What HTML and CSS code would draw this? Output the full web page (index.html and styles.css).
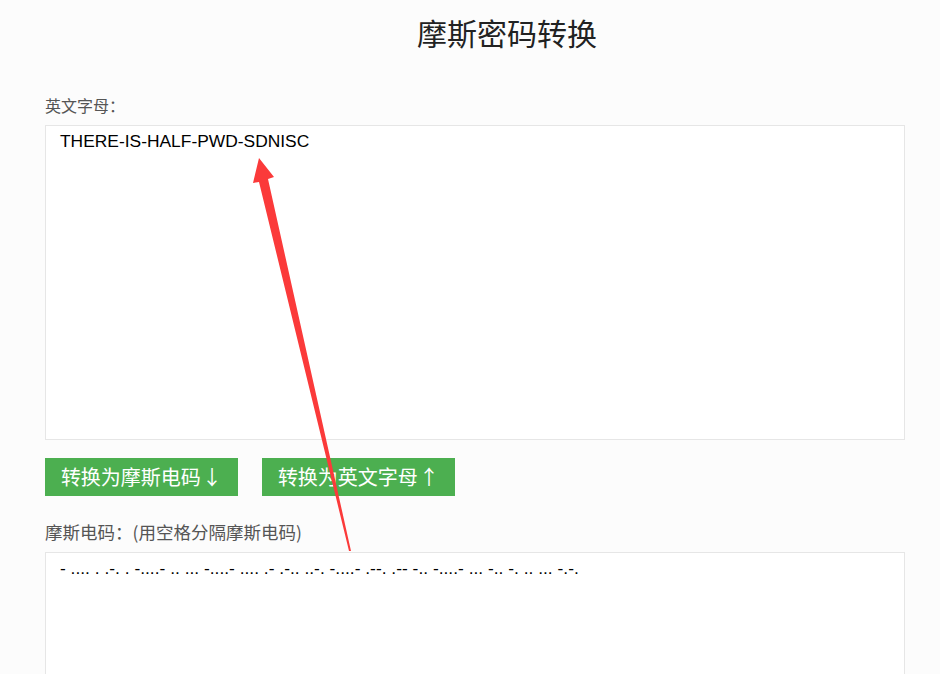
FILE: index.html
```html
<!DOCTYPE html>
<html lang="zh-CN">
<head>
<meta charset="utf-8">
<title>摩斯密码转换</title>
<link rel="stylesheet" href="styles.css">
</head>
<body>
<div class="page">
  <h1 class="title">摩斯密码转换</h1>
  <div class="field">
    <label class="label label-en" for="en">英文字母：</label>
    <textarea id="en" class="box" spellcheck="false">THERE-IS-HALF-PWD-SDNISC</textarea>
  </div>
  <div class="actions">
    <button class="btn">转换为摩斯电码&#8202;↓</button>
    <button class="btn">转换为英文字母&#8202;↑</button>
  </div>
  <div class="field">
    <label class="label label-morse" for="morse">摩斯电码：(用空格分隔摩斯电码)</label>
    <textarea id="morse" class="box box-morse" spellcheck="false">- .... . .-. . -....- .. ... -....- .... .- .-.. ..-. -....- .--. .-- -.. -....- ... -.. -. .. ... -.-.</textarea>
  </div>
  <svg class="arrow" width="940" height="674" viewBox="0 0 940 674" aria-hidden="true">
    <polygon points="259,158 274,177 268,179 351,551 349,551 259,182 253,183" fill="#fb3a3a"/>
  </svg>
</div>
</body>
</html>
```
FILE: styles.css
```css
html, body {
  margin: 0;
  padding: 0;
  background: #fcfcfc;
}
body {
  font-family: "Noto Sans CJK SC", "Liberation Sans", sans-serif;
  color: #333;
  overflow: hidden;
}
.page {
  position: relative;
  width: 940px;
  height: 674px;
  box-sizing: border-box;
  padding: 12px 35px 0 45px;
  overflow: hidden;
}
.title {
  margin: 0;
  padding-left: 64px;
  text-align: center;
  font-size: 30px;
  line-height: 40px;
  font-weight: normal;
  color: #222;
}
.field {
  display: flex;
  flex-direction: column;
}
.label {
  display: block;
  font-size: 16px;
  line-height: 24px;
  color: #555;
  margin-bottom: 8px;
}
.label-en {
  margin-top: 41px;
}
.label-morse {
  font-size: 17.5px;
  margin-top: 24px;
}
.box {
  display: block;
  width: 860px;
  height: 315px;
  box-sizing: border-box;
  margin: 0;
  border: 1px solid #e6e6e6;
  background: #fff;
  padding: 5px 14px 4px;
  font-family: "Liberation Sans", Arial, sans-serif;
  font-size: 17.4px;
  color: #000;
  resize: none;
  outline: none;
  overflow: hidden;
}
.box-morse {
  letter-spacing: 0;
}
.actions {
  display: flex;
  gap: 24px;
  margin-top: 18px;
}
.btn {
  height: 38px;
  width: 193px;
  border: 0;
  padding: 0;
  background: #4caf50;
  color: #fff;
  font-family: "Noto Sans CJK SC", "Liberation Sans", sans-serif;
  font-size: 20px;
  line-height: 38px;
  cursor: pointer;
}
.arrow {
  position: absolute;
  left: 0;
  top: 0;
  pointer-events: none;
}
```
